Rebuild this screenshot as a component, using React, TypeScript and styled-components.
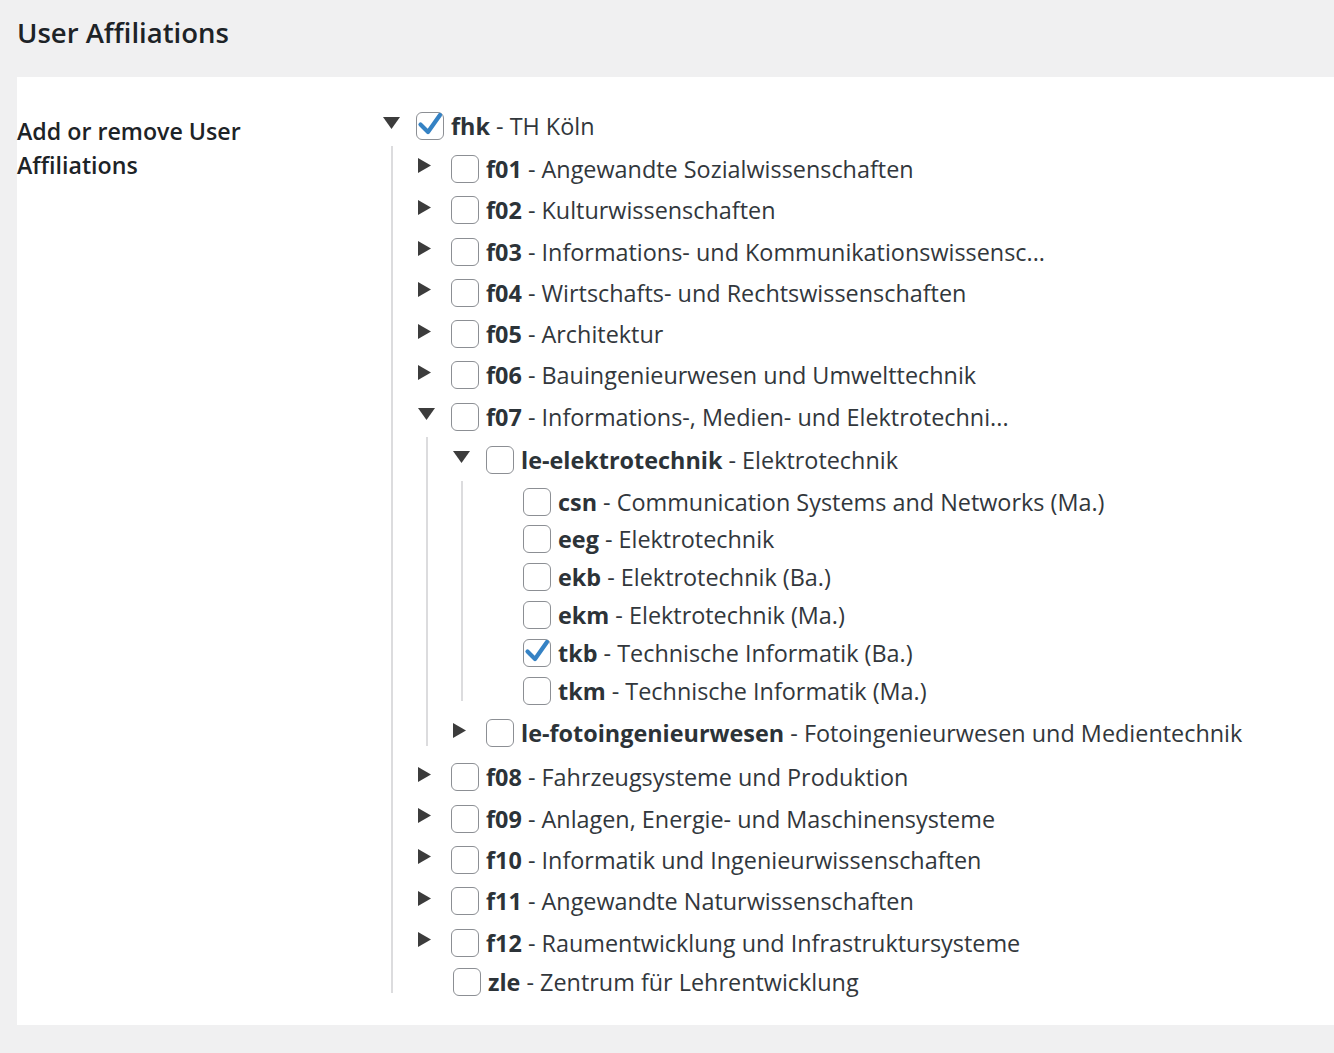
import React from 'react';
import styled, { createGlobalStyle } from 'styled-components';

type Node = {
  code: string;
  name: string;
  checked?: boolean;
  open?: boolean;
  hasChildren?: boolean;
  children?: Node[];
};

const tree: Node = {
  code: 'fhk',
  name: 'TH Köln',
  checked: true,
  open: true,
  hasChildren: true,
  children: [
    { code: 'f01', name: 'Angewandte Sozialwissenschaften', hasChildren: true },
    { code: 'f02', name: 'Kulturwissenschaften', hasChildren: true },
    { code: 'f03', name: 'Informations- und Kommunikationswissensc...', hasChildren: true },
    { code: 'f04', name: 'Wirtschafts- und Rechtswissenschaften', hasChildren: true },
    { code: 'f05', name: 'Architektur', hasChildren: true },
    { code: 'f06', name: 'Bauingenieurwesen und Umwelttechnik', hasChildren: true },
    {
      code: 'f07',
      name: 'Informations-, Medien- und Elektrotechni...',
      hasChildren: true,
      open: true,
      children: [
        {
          code: 'le-elektrotechnik',
          name: 'Elektrotechnik',
          hasChildren: true,
          open: true,
          children: [
            { code: 'csn', name: 'Communication Systems and Networks (Ma.)' },
            { code: 'eeg', name: 'Elektrotechnik' },
            { code: 'ekb', name: 'Elektrotechnik (Ba.)' },
            { code: 'ekm', name: 'Elektrotechnik (Ma.)' },
            { code: 'tkb', name: 'Technische Informatik (Ba.)', checked: true },
            { code: 'tkm', name: 'Technische Informatik (Ma.)' },
          ],
        },
        { code: 'le-fotoingenieurwesen', name: 'Fotoingenieurwesen und Medientechnik', hasChildren: true },
      ],
    },
    { code: 'f08', name: 'Fahrzeugsysteme und Produktion', hasChildren: true },
    { code: 'f09', name: 'Anlagen, Energie- und Maschinensysteme', hasChildren: true },
    { code: 'f10', name: 'Informatik und Ingenieurwissenschaften', hasChildren: true },
    { code: 'f11', name: 'Angewandte Naturwissenschaften', hasChildren: true },
    { code: 'f12', name: 'Raumentwicklung und Infrastruktursysteme', hasChildren: true },
    { code: 'zle', name: 'Zentrum für Lehrentwicklung' },
  ],
};

function TreeNode({ node }: { node: Node }) {
  return (
    <Item>
      <Row $leaf={!node.hasChildren}>
        {node.hasChildren ? (
          <Toggle>
            {node.open ? (
              <svg width="17" height="12" viewBox="0 0 17 12">
                <polygon points="0,0 17,0 8.5,12" fill="#3c3c3c" />
              </svg>
            ) : (
              <svg width="13" height="15" viewBox="0 0 13 15">
                <polygon points="0,0 13,7.5 0,15" fill="#3c3c3c" />
              </svg>
            )}
          </Toggle>
        ) : (
          <Spacer />
        )}
        <Box $checked={node.checked}>
          {node.checked && (
            <svg width="28" height="28" viewBox="0 0 28 28">
              <polyline
                points="5.5,13.5 13,21 25,4"
                fill="none"
                stroke="#3582c4"
                strokeWidth="4.2"
                strokeLinecap="round"
                strokeLinejoin="round"
              />
            </svg>
          )}
        </Box>
        <Label>
          <Code>{node.code}</Code> - {node.name}
        </Label>
      </Row>
      {node.open && node.children && (
        <Children>
          {node.children.map((c) => (
            <TreeNode key={c.code} node={c} />
          ))}
        </Children>
      )}
    </Item>
  );
}

function App() {
  return (
    <Page>
      <GlobalStyle />
      <Title>User Affiliations</Title>
      <Panel>
        <FieldLabel>
          <span>Add or remove User Affiliations</span>
        </FieldLabel>
        <Tree>
          <TreeNode node={tree} />
        </Tree>
      </Panel>
    </Page>
  );
}

const GlobalStyle = createGlobalStyle`
  html, body {
    margin: 0;
    background: #f0f0f1;
  }
  body {
    font-family: "Open Sans", "Noto Sans", sans-serif;
    color: #2c3338;
  }
`;

const Page = styled.div`
  min-height: 1053px;
  padding: 15px 0 0 17px;
  box-sizing: border-box;
`;

const Title = styled.h2`
  margin: 0;
  font-size: 27.5px;
  line-height: 36px;
  font-weight: 600;
  color: #1d2327;
`;

const Panel = styled.div`
  margin-top: 26px;
  background: #fff;
  display: flex;
  align-items: flex-start;
  padding-bottom: 21px;
`;

const FieldLabel = styled.div`
  width: 366px;
  flex-shrink: 0;
  padding-top: 37px;
  font-size: 23.2px;
  line-height: 34px;
  font-weight: 600;
  color: #1d2327;

  span {
    display: block;
    max-width: 290px;
  }
`;

const Tree = styled.ul`
  list-style: none;
  margin: 0;
  padding: 28px 0 0 0;
`;

const Item = styled.li`
  list-style: none;
  margin: 0;
  padding: 0;
`;

const Children = styled.ul`
  display: flow-root;
  list-style: none;
  margin: 0 0 11px 8px;
  padding: 2px 0 0 25px;
  border-left: 2px solid #dcdcde;

  & > li:last-child {
    margin-bottom: -8px;
  }
`;

const Row = styled.div<{ $leaf?: boolean }>`
  display: flex;
  align-items: center;
  height: ${(p) => (p.$leaf ? '37.8px' : '41.3px')};
  white-space: nowrap;
`;

const Toggle = styled.span`
  width: 33px;
  flex-shrink: 0;
  display: flex;
  align-items: center;
  transform: translateY(-3px);

  svg {
    display: block;
  }
`;

const Spacer = styled.span`
  width: 35px;
  flex-shrink: 0;
`;

const Box = styled.span<{ $checked?: boolean }>`
  position: relative;
  width: 28px;
  height: 28px;
  flex-shrink: 0;
  box-sizing: border-box;
  border: 1.7px solid #8c8f94;
  border-radius: 6px;
  background: #fff;
  margin-right: 7px;

  svg {
    position: absolute;
    left: -1.7px;
    top: -1.7px;
    overflow: visible;
  }
`;

const Label = styled.span`
  font-size: 23.4px;
  line-height: 30px;
  color: #32373c;
`;

const Code = styled.b`
  font-weight: 700;
  color: #2c3338;
`;

export default App;
